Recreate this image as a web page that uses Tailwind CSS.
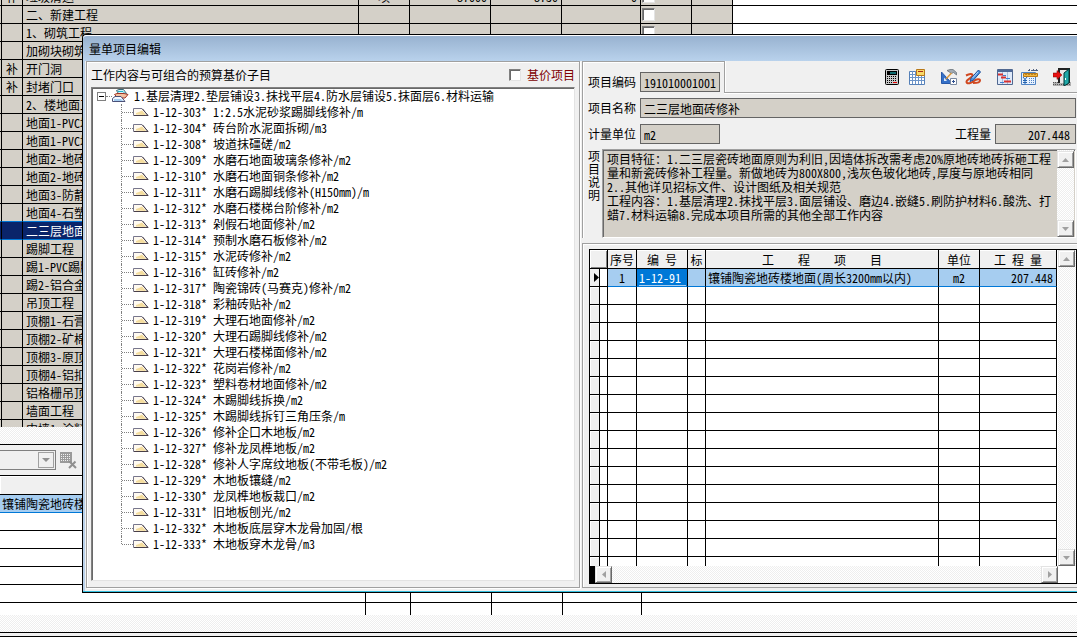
<!DOCTYPE html>
<html lang="zh-CN">
<head>
<meta charset="utf-8">
<title>量单项目编辑</title>
<script src="https://cdn.jsdelivr.net/npm/@tailwindcss/browser@4"></script>
</head>
<body class="relative min-h-screen overflow-hidden bg-white font-['Noto_Sans_Mono_CJK_SC','Noto_Sans_CJK_SC',monospace] text-xs text-black">

<!-- main window -->
<main>
  <div class="h-[427px] overflow-hidden">
    <table class="-mt-3 w-full table-fixed border-separate border-spacing-0 leading-[17px]">
      <colgroup><col class="w-[2px]"><col class="w-[21px]"><col class="w-[336px]"><col class="w-[51px]"><col class="w-[81px]"><col class="w-[71px]"><col class="w-[79px]"><col class="w-[51px]"><col class="w-[41px]"><col></colgroup>
      <tbody id="list"></tbody>
    </table>
  </div>
  <div class="h-[17px] bg-[repeating-conic-gradient(#fff_0_25%,#eeeeee_0_50%)] bg-[length:2px_2px]"></div>
  <div class="flex h-8 items-center gap-1 border-y border-black bg-[#f0f0f0]">
    <div class="flex h-5 w-14 items-center justify-end border border-l-0 border-[#808080] pr-px">
      <button aria-label="展开" class="flex size-4 items-center justify-center border border-[#a0a0a0]"><svg class="h-1 w-2" viewBox="0 0 8 4"><path d="M0 0h8L4 4z" fill="#909090"/></svg></button>
    </div>
    <button aria-label="删除"><svg class="size-[17px]" viewBox="0 0 17 17"><path d="M0 0h12v11H0z" fill="#9a9a9a"/><path d="M1 2.500h10M1 4.500h10M1 6.500h10M1 8.500h10" stroke="#f0f0f0" stroke-dasharray="1 1"/><path d="M9 9l7 7M15.500 9.500L9 16" stroke="#909090" stroke-width="2"/></svg></button>
  </div>
  <table class="w-full table-fixed border-separate border-spacing-0 leading-[17px]">
    <colgroup><col class="w-[366px]"><col class="w-[45px]"><col class="w-[81px]"><col class="w-[71px]"><col class="w-[79px]"><col></colgroup>
    <tbody id="detail"></tbody>
  </table>
  <div class="h-[17px] bg-[repeating-conic-gradient(#fff_0_25%,#eeeeee_0_50%)] bg-[length:2px_2px]"></div>
  <div class="h-[5px] border-y border-black bg-[#f0f0f0]"></div>
</main>

<!-- dialog window -->
<section role="dialog" aria-labelledby="dlg" class="absolute top-[34px] right-0 left-[82px] flex h-[559px] flex-col rounded-tl border-y border-l border-black bg-[#f0f0f0] shadow-[inset_0_-1px_0_#35c0e0,inset_2px_0_0_#b9d1ea]">
  <h1 id="dlg" class="h-[26px] rounded-tl border-t border-white bg-linear-to-b from-[#98b2d0] to-[#b9d2ec] pl-1.5 leading-[25px]">量单项目编辑</h1>
  <div class="flex min-h-0 flex-1 gap-0.5 pb-1 pl-[3px]">

    <div class="flex w-[494px] shrink-0 flex-col border border-[#a0a0a0] px-1 pb-1.5 shadow-[inset_1px_1px_0_#fff,1px_1px_0_#fff]">
      <div class="flex h-[25px] items-center">
        <h2 class="flex-1">工作内容与可组合的预算基价子目</h2>
        <label class="flex items-center gap-1.5 text-[#800000]"><input type="checkbox" class="size-3 appearance-none border border-[#e3e3e3] border-t-[#808080] border-l-[#808080] bg-white shadow-[inset_1px_1px_0_#696969]">基价项目</label>
      </div>
      <div class="flex-1 border border-[#e3e3e3] border-t-[#808080] border-l-[#808080] bg-white leading-4 shadow-[inset_1px_1px_0_#696969]">
        <div class="flex h-4 items-center pl-[5px]">
          <button aria-label="折叠" class="flex size-[9px] items-center justify-center border border-[#808080]"><span class="h-px w-[5px] bg-black"></span></button>
          <span class="w-[6px] border-t border-dotted border-[#808080]"></span>
          <svg class="mr-[5px] h-[14px] w-[17px]" viewBox="0 0 17 14"><path d="M4.500 1.500L7 .5h4.500l3 4-2 1H7z" fill="#d8f4f8" stroke="#3a6878"/><path d="M6 2.500h5l2 2" stroke="#20b0c8" fill="none"/><path d="M2.500 5.500L5 4.500h7l4 1-3 3.500H6z" fill="#f4c0a0" stroke="#a03828"/><path d="M.5 12.500v-3l2.500-2h6l4 5z" fill="#f4f8ff" stroke="#4a5078"/><path d="M2 10h7l2 2H2z" fill="#a4ccf0"/></svg>
          <span>1.基层清理2.垫层铺设3.抹找平层4.防水层铺设5.抹面层6.材料运输</span>
        </div>
        <ul id="tree" class="pl-[29px]"></ul>
      </div>
    </div>

    <div class="flex min-w-0 flex-1 flex-col border-b border-[#a0a0a0]">
      <div class="flex h-8">
        <div class="flex w-[142px] items-end gap-1 border-t border-l border-[#a0a0a0] pb-px pl-[5px] shadow-[inset_1px_1px_0_#fff]">
          <label for="code" class="w-12 leading-5">项目编码</label>
          <input id="code" value="191010001001" class="h-5 w-20 border border-[#646464] bg-[#d4d0c8] px-[3px]">
        </div>
        <div class="flex flex-1 items-center justify-end border-b border-l border-[#a0a0a0] pr-1.5 shadow-[inset_1px_0_0_#fff,0_1px_0_#fff]">
          <button aria-label="计算器" class="mr-2.5"><svg class="h-4 w-3.5" viewBox="0 0 14 16"><rect x=".5" y=".5" width="13" height="15" rx="1" fill="#c8c8c8" stroke="#000"/><path d="M2 2h10v4H2z" fill="#000"/><path d="M5 4h6" stroke="#20d8e0"/><path d="M2 7.500h10M2 9.500h10M2 11.500h10" stroke="#000" stroke-dasharray="1 1"/><path d="M2 13.500h5" stroke="#000" stroke-dasharray="1 1"/><path d="M8 13.500h4" stroke="#e00000"/></svg></button>
          <button aria-label="表格" class="mr-4"><svg class="size-4" viewBox="0 0 16 16"><path d="M.5 2.500h15v13H.5z" fill="#fff" stroke="#5580b8"/><path d="M3.500 2v13M6.500 2v13M9.500 2v13M12.500 2v13M1 5.500h14M1 8.500h14M1 11.500h14" stroke="#6c94c8"/><path d="M7.500.5h8v6h-8z" fill="#f8d868" stroke="#b87818"/><path d="M9 2.500h5" stroke="#a82818"/></svg></button>
          <button aria-label="工具" class="mr-2"><svg class="size-4" viewBox="0 0 16 16"><path d="M.5 3v11.500H11z" fill="#3470c8" stroke="#2858a8"/><path d="M3 8.500v3.500h3z" fill="#dfeaf8"/><path d="M6 1.500L9 .5h3l3.500 3v2.500l-3-2.500-2 1z" fill="#a0aab4" stroke="#606870" stroke-width=".7"/><path d="M10.500 4L5 10" stroke="#d89840" stroke-width="1.500"/><path d="M9.500 9.500h6v6h-6z" fill="#fff" stroke="#7888a0"/><path d="M12.500 11v3M11 12.500h3" stroke="#305090"/></svg></button>
          <button aria-label="编辑" class="mr-4"><svg class="size-4" viewBox="0 0 16 16"><path d="M1 6.500c3-1.500 7-2.500 6.500 0S1 10.500 1.500 13s5 1 7.500-1 6-2.500 6-.5-4 2.500-7 2.500" fill="none" stroke="#d04820" stroke-width="2"/><path d="M13.500 1l2 2-7 8-3.500 1.500 1-3z" fill="#4c94e0" stroke="#1c4c98"/><path d="M13 3l-5.500 6" stroke="#b8dcff"/></svg></button>
          <button aria-label="进度" class="mr-[7px]"><svg class="size-4" viewBox="0 0 16 16"><path d="M.5.5h15v15H.5z" fill="#dfeafa" stroke="#506890"/><path d="M1 1h14v2H1z" fill="#4c6898"/><path d="M5.500 3v12M10.500 3v12" stroke="#a8bcdc"/><path d="M1 5.500h5M4 8.500h5M7 12.500h7" stroke="#d83030" stroke-width="2"/><path d="M6 6.500h3M9 9.500h4M3 13.500h4" stroke="#4080d0"/></svg></button>
          <button aria-label="费用" class="mr-[15px]"><svg class="h-4 w-[18px]" viewBox="0 0 18 16"><path d="M1.500 3.500h14v12h-14z" fill="#e8f2ff" stroke="#5084c4"/><path d="M8 1.500h10M9.500 0v3M13.500 0v3M16.500 0v3" stroke="#506080" stroke-dasharray="2 1"/><path d="M3.500 4.500h14v3h-14z" fill="#f4b83c" stroke="#b87818"/><path d="M6 5v1M9 5v1M12 5v1M15 5v1" stroke="#805010"/><path d="M3 8l2 2.500L7 8M5 10v5M3 11.500h4M3 13.500h4" stroke="#2464b0" fill="none"/><path d="M9 9.500h6M9 11.500h6M9 13.500h6" stroke="#5084c4" stroke-dasharray="1 1"/></svg></button>
          <button aria-label="退出"><svg class="h-[18px] w-[18px]" viewBox="0 0 18 18"><path d="M0 14h18v4H0z" fill="#b0b0b0"/><path d="M0 14.500h18M0 16.500h18" stroke="#555" stroke-dasharray="1 1"/><path d="M5 0h12v15H5z" fill="#222"/><path d="M7 2h7v13H7z" fill="#e8e8e8"/><path d="M16 1v14l-5 3V5z" fill="#20a8a8" stroke="#003838"/><path d="M12.500 10v2" stroke="#fff"/><path d="M0 5h4V2.500L9 7l-5 4.500V9H0z" fill="#e81010" stroke="#700" stroke-width=".5"/></svg></button>
        </div>
      </div>

      <div class="border-l border-[#a0a0a0] pl-[5px] shadow-[inset_1px_0_0_#fff]">
        <div class="flex items-center gap-1 pt-[5px] pr-px">
          <label for="name" class="w-12 leading-5">项目名称</label>
          <input id="name" value="二三层地面砖修补" class="h-5 min-w-0 flex-1 border border-[#646464] bg-[#d4d0c8] px-[3px]">
        </div>
        <div class="flex items-center gap-1 pt-1.5 pr-px">
          <label for="unit" class="w-12 leading-5">计量单位</label>
          <input id="unit" value="m2" class="h-5 w-20 border border-[#646464] bg-[#d4d0c8] px-[3px]">
          <label for="qty" class="ml-auto leading-5">工程量</label>
          <input id="qty" value="207.448" class="h-5 w-[81px] border border-[#646464] bg-[#d4d0c8] px-[5px] text-right">
        </div>
        <div class="flex gap-0.5 pt-[5px] pr-px">
          <label for="desc" class="w-3 leading-[13px] break-all">项目说明</label>
          <div class="flex h-[89px] min-w-0 flex-1 border border-white border-t-[#a0a0a0] border-l-[#a0a0a0] bg-[#d4d0c8] pr-px shadow-[inset_1px_1px_0_#696969]">
            <textarea id="desc" class="block min-w-0 flex-1 resize-none overflow-hidden pt-[2px] pl-1 leading-[14px] break-all whitespace-pre-wrap">项目特征：1.二三层瓷砖地面原则为利旧,因墙体拆改需考虑20%原地砖地砖拆砸工程量和新瓷砖修补工程量。新做地砖为800X800,浅灰色玻化地砖,厚度与原地砖相同
2..其他详见招标文件、设计图纸及相关规范
工程内容：1.基层清理2.抹找平层3.面层铺设、磨边4.嵌缝5.刷防护材料6.酸洗、打蜡7.材料运输8.完成本项目所需的其他全部工作内容</textarea>
            <div class="flex w-[17px] flex-col justify-between bg-[repeating-conic-gradient(#fff_0_25%,#eeeeee_0_50%)] bg-[length:2px_2px] pt-px">
              <button aria-label="上" class="flex size-[17px] items-center justify-center border border-[#696969] border-t-[#e3e3e3] border-l-[#e3e3e3] bg-[#f0f0f0] shadow-[inset_1px_1px_0_#fff,inset_-1px_-1px_0_#a0a0a0]"><svg class="h-1 w-[7px]" viewBox="0 0 7 4"><path d="M0 4h7L3.500 0z" fill="#a0a0a0"/></svg></button>
              <button aria-label="下" class="flex size-[17px] items-center justify-center border border-[#696969] border-t-[#e3e3e3] border-l-[#e3e3e3] bg-[#f0f0f0] shadow-[inset_1px_1px_0_#fff,inset_-1px_-1px_0_#a0a0a0]"><svg class="h-1 w-[7px]" viewBox="0 0 7 4"><path d="M0 0h7L3.500 4z" fill="#a0a0a0"/></svg></button>
            </div>
          </div>
        </div>
      </div>

      <div class="mt-[5px] flex min-h-0 flex-1 flex-col border-t border-l border-[#a0a0a0] pt-[5px] pb-[3px] pl-1.5 shadow-[inset_1px_1px_0_#fff]">
        <div class="flex min-h-0 flex-1 flex-col border border-black bg-white">
          <div class="flex min-h-0 flex-1 overflow-hidden">
            <div class="min-w-0 flex-1 overflow-hidden">
              <table class="w-full table-fixed border-separate border-spacing-0 leading-[17px]">
                <colgroup><col class="w-2.5"><col class="w-2"><col class="w-[29px]"><col class="w-[51px]"><col class="w-[18px]"><col><col class="w-[41px]"><col class="w-[77px]"></colgroup>
                <thead><tr class="h-[19px] bg-[#f0f0f0] shadow-[inset_0_1px_0_#fff]">
                  <th colspan="2" class="border-r border-b border-black shadow-[inset_1px_1px_0_#fff,inset_-1px_-1px_0_#808080]"></th>
                  <th class="border-r border-b border-black p-0 font-normal">序号</th>
                  <th class="border-r border-b border-black p-0 font-normal whitespace-pre">编 号</th>
                  <th class="border-r border-b border-black p-0 font-normal">标</th>
                  <th class="border-r border-b border-black p-0 font-normal whitespace-pre">工    程    项    目</th>
                  <th class="border-r border-b border-black p-0 font-normal">单位</th>
                  <th class="border-r border-b border-black p-0 font-normal whitespace-pre">工 程 量</th>
                </tr></thead>
                <tbody id="items">
                  <tr class="h-[18px] bg-[#a6cdf0]">
                    <td class="border-r border-b border-black bg-[#f0f0f0] p-0"><svg class="ml-1 h-[9px] w-[5px]" viewBox="0 0 5 9"><path d="M0 0v9l5-4.500z"/></svg></td>
                    <td class="border-r border-b border-black bg-white p-0"></td>
                    <td class="border-r border-b border-r-black border-b-[#0078d7] p-0 text-center">1</td>
                    <td class="border-r border-b border-r-black border-b-[#0078d7] bg-[#0078d7] p-0 pl-[2px] leading-[15px] text-white"><div class="mr-px border-b border-[#a6cdf0]">1-12-91</div></td>
                    <td class="border-r border-b border-r-black border-b-[#0078d7] p-0"></td>
                    <td class="overflow-hidden border-r border-b border-r-black border-b-[#0078d7] p-0 pl-[2px] whitespace-nowrap">镶铺陶瓷地砖楼地面(周长3200mm以内)</td>
                    <td class="border-r border-b border-r-black border-b-[#0078d7] p-0 text-center">m2</td>
                    <td class="border-r border-b border-r-black border-b-[#0078d7] p-0 pr-[3px] text-right">207.448</td>
                  </tr>
                </tbody>
              </table>
            </div>
            <div class="ml-px flex w-[18px] flex-col justify-between bg-[repeating-conic-gradient(#fff_0_25%,#eeeeee_0_50%)] bg-[length:2px_2px]">
              <button aria-label="上" class="flex size-[17px] items-center justify-center border border-[#696969] border-t-[#e3e3e3] border-l-[#e3e3e3] bg-[#f0f0f0] shadow-[inset_1px_1px_0_#fff,inset_-1px_-1px_0_#a0a0a0]"><svg class="h-1 w-[7px]" viewBox="0 0 7 4"><path d="M0 4h7L3.500 0z" fill="#a0a0a0"/></svg></button>
              <button aria-label="下" class="flex size-[17px] items-center justify-center border border-[#696969] border-t-[#e3e3e3] border-l-[#e3e3e3] bg-[#f0f0f0] shadow-[inset_1px_1px_0_#fff,inset_-1px_-1px_0_#a0a0a0]"><svg class="h-1 w-[7px]" viewBox="0 0 7 4"><path d="M0 0h7L3.500 4z" fill="#a0a0a0"/></svg></button>
            </div>
          </div>
          <div class="mr-[18px] flex h-[17px] shrink-0 justify-between bg-[repeating-conic-gradient(#fff_0_25%,#eeeeee_0_50%)] bg-[length:2px_2px]">
            <div class="flex"><span class="w-[5px] bg-black"></span>
            <button aria-label="左" class="flex size-[17px] items-center justify-center border border-[#696969] border-t-[#e3e3e3] border-l-[#e3e3e3] bg-[#f0f0f0] shadow-[inset_1px_1px_0_#fff,inset_-1px_-1px_0_#a0a0a0]"><svg class="h-[7px] w-1" viewBox="0 0 4 7"><path d="M4 0v7L0 3.500z" fill="#a0a0a0"/></svg></button></div>
            <button aria-label="右" class="flex size-[17px] items-center justify-center border border-[#696969] border-t-[#e3e3e3] border-l-[#e3e3e3] bg-[#f0f0f0] shadow-[inset_1px_1px_0_#fff,inset_-1px_-1px_0_#a0a0a0]"><svg class="h-[7px] w-1" viewBox="0 0 4 7"><path d="M0 0v7l4-3.500z" fill="#a0a0a0"/></svg></button>
          </div>
        </div>
      </div>
    </div>
  </div>
</section>

<script>
const rows = [['补','垃圾清运','项','87000','8730','0'],['','二、新建工程'],['','1、砌筑工程'],['','加砌块砌筑'],['补','开门洞'],['补','封堵门口'],['','2、楼地面工程'],['','地面1-PVC地面'],['','地面1-PVC地面'],['','地面2-地砖'],['','地面2-地砖'],['','地面3-防静电'],['','地面4-石塑'],['','二三层地面砖修补'],['','踢脚工程'],['','踢1-PVC踢脚'],['','踢2-铝合金'],['','吊顶工程'],['','顶棚1-石膏板'],['','顶棚2-矿棉板'],['','顶棚3-原顶'],['','顶棚4-铝扣板'],['','铝格栅吊顶'],['','墙面工程'],['','内墙1-涂料']];
const box = '<input type="checkbox" aria-label="标记" class="mt-[2px] ml-px block size-[13px] appearance-none border border-[#e3e3e3] border-t-[#808080] border-l-[#808080] bg-white shadow-[inset_1px_1px_0_#696969]">';
document.getElementById('list').innerHTML = rows.map((r, i) => {
  const on = i === 13;
  const c = on ? 'border-r border-b border-r-black border-b-[#0078d7] p-0 text-white' : i === 12 ? 'border-r border-b border-r-black border-b-[#0078d7] p-0' : 'border-r border-b border-black p-0';
  const td = (t, x = '') => `<td class="${c} ${x}">${t || ''}</td>`;
  return `<tr class="h-[18px] ${on ? 'bg-[#0a246a]' : 'bg-[#d4d0c8]'}">` + td('') + td(r[0], 'text-center') + td(r[1], 'pl-[3px] whitespace-nowrap overflow-hidden') + td(r[2], 'text-center') + td(r[3], 'pr-[3px] text-right') + td(r[4], 'pr-[3px] text-right') + td(r[5], 'pr-[3px] text-right') + td(box, 'align-top') + td('') + '<td class="border-b border-black bg-white p-0"></td></tr>';
}).join('');

const line = '<td class="border-r border-b border-black p-0"></td>';
let d = '<tr class="h-[18px] bg-[#f0f0f0]"><th colspan="6" class="h-[19px] border-b border-black p-0 shadow-[inset_1px_1px_0_#fff]"></th></tr>'
  + '<tr class="h-[18px] bg-[#a6cdf0]"><td colspan="6" class="border-b border-[#0078d7] p-0 pl-[2px]">镶铺陶瓷地砖楼地面</td></tr>';
for (let i = 0; i < 5; i++) d += '<tr class="h-[18px]">' + line.repeat(5) + '<td class="border-b border-black p-0"></td></tr>';
d += '<tr class="h-3">' + '<td class="border-r border-black p-0"></td>'.repeat(5) + '<td class="p-0"></td></tr>';
document.getElementById('detail').innerHTML = d;

document.getElementById('items').innerHTML += ('<tr class="h-[18px]"><td class="border-r border-b border-black bg-[#f0f0f0] p-0 shadow-[inset_1px_1px_0_#fff]"></td>' + line.repeat(7) + '</tr>').repeat(16);

const works = ['303* 1:2.5水泥砂浆踢脚线修补/m','304* 砖台阶水泥面拆砌/m3','308* 坡道抹礓磋/m2','309* 水磨石地面玻璃条修补/m2','310* 水磨石地面铜条修补/m2','311* 水磨石踢脚线修补(H150mm)/m','312* 水磨石楼梯台阶修补/m2','313* 剁假石地面修补/m2','314* 预制水磨石板修补/m2','315* 水泥砖修补/m2','316* 缸砖修补/m2','317* 陶瓷锦砖(马赛克)修补/m2','318* 彩釉砖贴补/m2','319* 大理石地面修补/m2','320* 大理石踢脚线修补/m2','321* 大理石楼梯面修补/m2','322* 花岗岩修补/m2','323* 塑料卷材地面修补/m2','324* 木踢脚线拆换/m2','325* 木踢脚线拆钉三角压条/m','326* 修补企口木地板/m2','327* 修补龙凤榫地板/m2','328* 修补人字席纹地板(不带毛板)/m2','329* 木地板镶缝/m2','330* 龙凤榫地板裁口/m2','331* 旧地板刨光/m2','332* 木地板底层穿木龙骨加固/根','333* 木地板穿木龙骨/m3'];
document.getElementById('tree').innerHTML = works.map((w, i) =>
  `<li class="flex h-4 items-center"><span class="${i === works.length - 1 ? 'h-2 self-start' : 'h-4'} w-0 border-l border-dotted border-[#808080]"></span><span class="w-[11px] border-t border-dotted border-[#808080]"></span><svg class="mr-1 h-2 w-4 shrink-0" viewBox="0 0 16 8"><path d="M.5.5H9l6 7H.5z" fill="#fffaf0" stroke="#77768c"/><path d="M3 6.500V5l3-1 3-1.500L13 7z" fill="#f4dc9c"/><path d="M9.500 1L15 7.500H1" stroke="#4a4048" fill="none"/></svg><span class="whitespace-nowrap">1-12-${w}</span></li>`).join('');
</script>
</body>
</html>
